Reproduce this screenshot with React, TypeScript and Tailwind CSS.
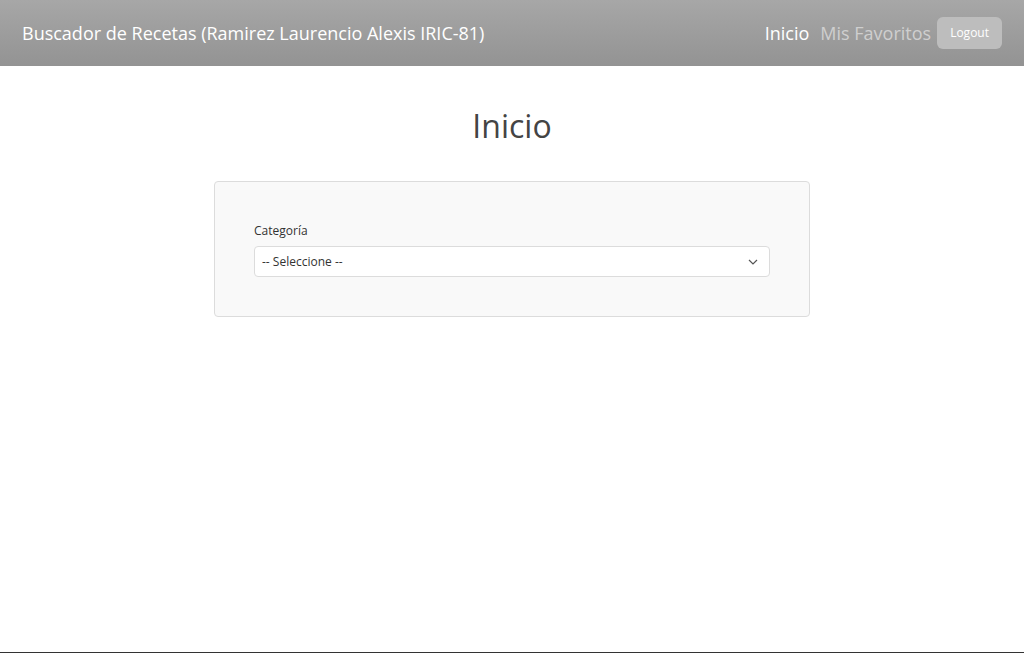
import React from "react";

export default function App() {
  return (
    <div
      className="flex min-h-screen flex-col bg-white text-[#444]"
      style={{ fontFamily: '"Open Sans", "Noto Sans", sans-serif' }}
    >
      <header className="flex h-[66px] items-center justify-between bg-gradient-to-b from-[#a7a7a7] to-[#939393] pl-[22px] pr-[22px]">
        <span className="mt-[1px] text-[18px] text-white">Buscador de Recetas (Ramirez Laurencio Alexis IRIC-81)</span>
        <nav className="flex items-center">
          <a className="mt-[1px] mr-[11px] text-[18px] text-white">Inicio</a>
          <a className="mt-[1px] mr-[6px] text-[18px] text-[#cfcfcf]">Mis Favoritos</a>
          <button className="h-[32px] rounded-[6px] bg-[#bdbdbd] px-[13px] text-[12px] text-white">Logout</button>
        </nav>
      </header>

      <main className="flex flex-1 flex-col items-center">
        <h1 className="mt-[38px] text-[32px] leading-[44px] font-normal text-[#444]">Inicio</h1>
        <div className="mt-[33px] w-[596px] rounded-[4px] border border-[#dcdcdc] bg-[#f9f9f9] px-[39px] pt-[40px] pb-[39px]">
          <label className="mb-[6px] block text-[12px] leading-[18px] text-[#333]">Categoría</label>
          <div className="relative">
            <select className="h-[31px] w-full appearance-none rounded-[4px] border border-[#dcdcdc] bg-white pl-[7px] text-[12px] text-[#333] outline-none">
              <option>-- Seleccione --</option>
            </select>
            <svg
              className="pointer-events-none absolute right-[12px] top-1/2 -translate-y-1/2"
              width="10"
              height="6"
              viewBox="0 0 10 6"
              fill="none"
            >
              <path d="M1 1l4 4 4-4" stroke="#555" strokeWidth="1.2" />
            </svg>
          </div>
        </div>
      </main>

      <footer className="h-px bg-[#333]" />
    </div>
  );
}
